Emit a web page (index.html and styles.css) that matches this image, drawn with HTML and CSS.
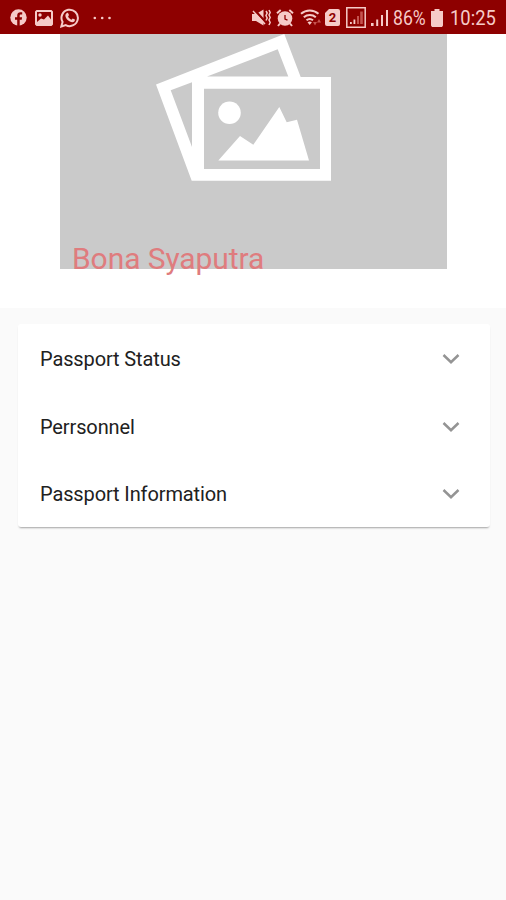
FILE: index.html
```html
<!DOCTYPE html>
<html lang="en">
<head>
<meta charset="utf-8">
<title>Passport</title>
<link rel="stylesheet" href="styles.css">
</head>
<body>
<header class="status">
  <div class="status-left">
    <svg width="17" height="17" viewBox="0 0 17 17"><circle cx="8.5" cy="8.5" r="8.2"/><path class="cut" d="M7.2 17v-6.200H5V8.300h2.200V6.600C7.200 4.400 8.500 3.300 10.400 3.300h1.800v2.200h-1.200c-1 0-1.300.5-1.300 1.200v1.600h2.400l-.4 2.500h-2V17z"/></svg>
    <svg width="18" height="16" viewBox="0 0 18 16"><path fill-rule="evenodd" d="M1.500 0h15L18 1.500v13L16.500 16h-15L0 14.500v-13zM2 2v10l4-3.500 3 1 4-4 3 4V2z"/><circle cx="5" cy="5" r="1.700"/></svg>
    <svg class="chat" width="20" height="20" viewBox="0 0 20 20"><path class="line" d="M1.300 18.500l1.300-4.500a8.200 8.200 0 1 1 3.200 3.100z"/><path d="M6.600 5.200c.7-.6 1.500-.4 1.700.2l.7 1.700-.9 1.300c.8 1.700 1.900 2.600 3.500 3.300l1.100-1.200 2.200 1.100c.3 1.500-1 2.700-2.500 2.700-3.400-.2-7-3.800-7-6.800 0-1 .5-1.800 1.200-2.300z"/></svg>
    <svg class="more" width="18" height="4" viewBox="0 0 18 4"><circle cx="1.800" cy="2" r="1.300"/><circle cx="9.200" cy="2" r="1.300"/><circle cx="16.500" cy="2" r="1.300"/></svg>
  </div>
  <div class="status-right">
    <svg width="19" height="17" viewBox="0 0 19 17"><path d="M0 5h4l7.500-4.500v16L4 12H0z"/><path class="slash" d="M1.500 0l12 13"/><path class="line thin" d="M1 2l12 13M14 2l1.200 2L14 6.500l1.200 2.500L14 11.500M17 1l1.200 2.500L17 6l1.200 2.500L17 11l1.200 2.500L17 16"/></svg>
    <svg class="alarm" width="18" height="18" viewBox="0 0 18 18"><circle cx="9" cy="9.500" r="7.300"/><path class="line" d="M1 4.200L4.700 1M17 4.200L13.300 1M4 14.500L2 17M14 14.500l2 2.500"/><path class="cutline" d="M9 6v4l2.500 1.200"/></svg>
    <svg class="wifi" width="22" height="17" viewBox="0 0 22 17"><path class="line" d="M1 4.800c5-4.400 12.500-4.400 17.500 0M3.800 8.200c3.500-3 8.500-3 12 0M6.500 11.300c2-1.700 4.500-1.700 6.500 0"/><path d="M7.500 13.200q2.200-1.600 4.400 0L9.700 16z"/><path class="dim" d="M13 13h4l-2 3.500zM17 13.500l2-3.500 2 3.500z"/></svg>
    <div class="sim">2</div>
    <svg class="boxed" width="20" height="21" viewBox="0 0 20 21"><path class="line thin" d="M.8.800h18.400v19.400H.8z"/><path d="M4 15h1.800v2H4zM7.500 12.500h1.800V17H7.500z"/><path class="dim" d="M11 9h2v8h-2zM14.200 4.500h2.600V17h-2.600z"/></svg>
    <svg class="signal" width="18" height="17" viewBox="0 0 18 17"><path d="M0 14h2.600v3H0zM5.200 10.500h2V17h-2zM10 6h2v11h-2zM15 1h2v16h-2z"/></svg>
    <span class="percent">86%</span>
    <svg class="battery" width="12" height="18" viewBox="0 0 12 18"><path d="M3.500 0h5v2H12v14.500L11 18H1l-1-1.500V2h3.500z"/></svg>
    <span class="clock">10:25</span>
  </div>
</header>
<section class="hero">
  <div class="photo">
    <svg class="placeholder" width="387" height="235" viewBox="60 34 387 235"><path fill-rule="evenodd" d="M156 84.500L284.300 34l16.400 43H331v103.800H191.700zM170.700 90.300L192 147V82.200zM207 76.500h81.300l-10.600-27.200zM204 88.700V169h116V88.700z"/><circle cx="229.500" cy="112.700" r="11.300"/><path d="M218.300 160.500L240 136l13.300 8.700 26-37.700 7.400 15.300 10.300-2.600 12 40.800z"/></svg>
    <h1 class="name">Bona Syaputra</h1>
  </div>
</section>
<main class="panel">
  <div class="row"><span>Passport Status</span><svg class="chevron" width="18" height="12" viewBox="0 0 18 12"><path d="M1.500 2L9 9.200 16.500 2"/></svg></div>
  <div class="row"><span>Perrsonnel</span><svg class="chevron" width="18" height="12" viewBox="0 0 18 12"><path d="M1.500 2L9 9.200 16.500 2"/></svg></div>
  <div class="row"><span>Passport Information</span><svg class="chevron" width="18" height="12" viewBox="0 0 18 12"><path d="M1.500 2L9 9.200 16.500 2"/></svg></div>
</main>
</body>
</html>
```

FILE: styles.css
```css
* { box-sizing: border-box; }
body {
  margin: 0;
  min-height: 900px;
  background: #fafafa;
  color: #212121;
  font-family: Roboto, "Liberation Sans", sans-serif;
}
svg { display: block; flex: none; }
.status {
  height: 34px;
  padding: 0 11px 0 10px;
  background: #8e0000;
  color: #f6cbc8;
  display: flex;
  justify-content: space-between;
}
.status svg { fill: #f6cbc8; }
.status .line { fill: none; stroke: #f6cbc8; stroke-width: 2; }
.status .thin { stroke-width: 1.5; }
.status .cut { fill: #8e0000; }
.status .slash { fill: none; stroke: #8e0000; stroke-width: 2.5; }
.status .cutline { fill: none; stroke: #8e0000; stroke-width: 1.3; }
.status .dim { fill: #c5534f; }
.status-left, .status-right { display: flex; align-items: center; height: 35px; }
.status-left { gap: 8px; }
.chat { margin-left: -1px; }
.status-left .more { margin-left: 5px; }
.alarm { margin-left: 5px; }
.wifi { margin-left: 6px; }
.sim {
  width: 15px;
  height: 17px;
  margin-left: 3px;
  border-radius: 2px;
  background: #f6cbc8;
  clip-path: polygon(4px 0, 100% 0, 100% 100%, 0 100%, 0 4px);
  color: #8e0000;
  font-size: 13px;
  font-weight: 700;
  line-height: 17px;
  text-align: center;
}
.boxed { margin-left: 6px; }
.signal { margin-left: 5px; }
.percent, .clock {
  flex: none;
  font-size: 20px;
  line-height: 36px;
  white-space: nowrap;
  transform-origin: left center;
}
.percent { width: 34px; margin-left: 4px; transform: scaleX(.88); }
.battery { margin-left: 4px; }
.clock { width: 45px; margin-left: 7px; transform: scaleX(.92); }
.hero {
  height: 274px;
  padding: 0 59px 0 60px;
  background: #fff;
}
.photo {
  position: relative;
  height: 235px;
  background: #cacaca;
}
.placeholder { fill: #fff; }
.name {
  position: absolute;
  left: 12px;
  top: 207px;
  margin: 0;
  color: #df7c7e;
  font-size: 30px;
  font-weight: 400;
  letter-spacing: -.08px;
  line-height: 36px;
  white-space: nowrap;
}
.panel {
  margin: 16px 16px 0 18px;
  height: 203px;
  background: #fff;
  border-radius: 3px;
  box-shadow: 0 2px 2px -1px rgba(0, 0, 0, .35);
  display: flex;
  flex-direction: column;
}
.row {
  flex: 1;
  padding: 2px 30px 0 22px;
  display: flex;
  align-items: center;
  justify-content: space-between;
  font-size: 20px;
  letter-spacing: -.12px;
}
.chevron { fill: none; stroke: #949494; stroke-width: 2.5; }
```
